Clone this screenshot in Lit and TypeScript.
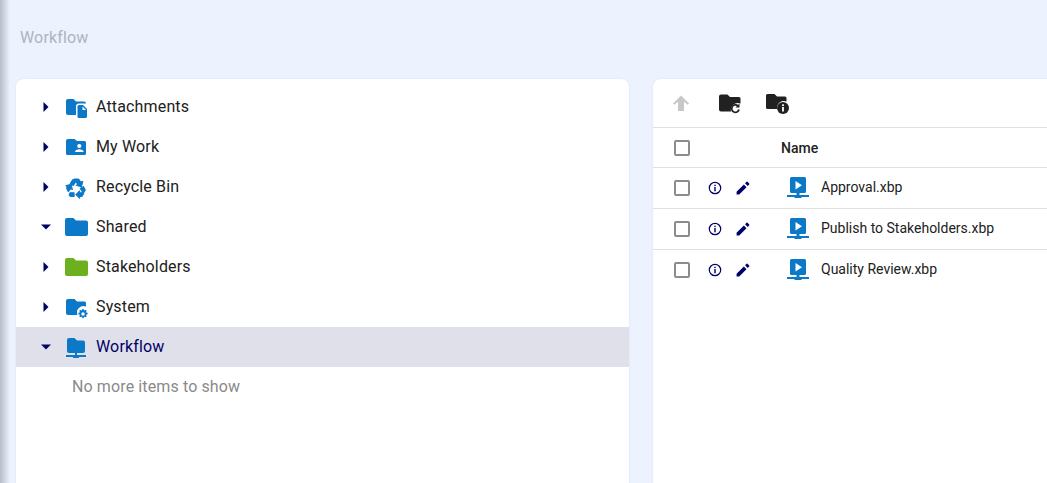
import { LitElement, html, css, svg } from "lit";
import { customElement } from "lit/decorators.js";

const FOLDER = "M1 3h6.500L10 5.500h10a2 2 0 0 1 2 2V19a2 2 0 0 1-2 2H1a2 2 0 0 1-2-2V5a2 2 0 0 1 2-2z";

const icons: Record<string, unknown> = {
  attachments: svg`<path fill="#0b78c8" d="M2 4h5.500L10 6.500h8a2 2 0 0 1 2 2h-7a3 3 0 0 0-3 3V20H2a2 2 0 0 1-2-2V6a2 2 0 0 1 2-2z"/>
    <path fill="#0b78c8" d="M13 10h4l4 4v7.500a1.500 1.500 0 0 1-1.500 1.500h-6.500a1.500 1.500 0 0 1-1.500-1.500v-10a1.500 1.500 0 0 1 1.500-1.500z"/>
    <path fill="#fff" d="M16.500 11.500V15h3.500z"/>`,
  mywork: svg`<path fill="#0b78c8" d="M2 4h6.500L11 6h7.500A1.500 1.500 0 0 1 20 7.500v11a1.500 1.500 0 0 1-1.500 1.500h-17A1.500 1.500 0 0 1 0 18.500V6a2 2 0 0 1 2-2z"/>
    <circle cx="13.300" cy="11" r="2.100" fill="#fff"/><path fill="#fff" d="M9 17c0-2 2.300-2.800 4.300-2.800s4.300.8 4.300 2.800z"/>`,
  recycle: svg`<g transform="translate(-1.100 2.100) scale(.92)"><path fill="#0b78c8" stroke="#0b78c8" stroke-width="1.100" stroke-linejoin="round" d="M5.770 7.150 7.200 4.780l1.030-1.710c.39-.65 1.330-.65 1.720 0l1.480 2.460-1.230 2.060-1 1.620zM17.100 5.400l-1.500-2.450C15.250 2.350 14.600 2 13.900 2h-3.600l3.600 6-1.730 1 5.770 1.540L19.480 4.770zM21.720 12.970l-1.600-2.660-3.460 2L18.870 16H20c.76 0 1.450-.43 1.790-1.110.14-.28.21-.58.21-.89 0-.36-.1-.71-.28-1.030zM16 21h1.500c.76 0 1.450-.43 1.790-1.110L20.740 17H16v-2l-4 4 4 4v-2zM10 17H5.700l-.84 1.400c-.36.6-.29 1.380.09 1.960.33.5.89.64 1.500.64H10zM6.460 12.510l1.730 1-1.540-5.770-5.770 1.540 1.740 1-.45.74c-.32.53-.35 1.180-.08 1.740l1.500 3z"/></g>`,
  shared: svg`<path fill="#0b78c8" d="${FOLDER}"/>`,
  stakeholders: svg`<path fill="#6cb01e" d="${FOLDER}"/>`,
  system: svg`<path fill="#0b78c8" d="M2 4h6.500L11 6.500h7.500A1.500 1.500 0 0 1 20 8v3.500A6.500 6.500 0 0 0 11.500 20H2a2 2 0 0 1-2-2V6a2 2 0 0 1 2-2z"/>
    <g transform="translate(17 19) scale(.75) translate(-17.500 -16.800)"><path fill="#0b78c8" fill-rule="evenodd" d="M16.600 10h1.800l.3 1.500 1.200.5 1.300-.8 1.300 1.300-.8 1.300.5 1.200 1.500.3v1.800l-1.500.3-.5 1.200.8 1.300-1.300 1.300-1.300-.8-1.200.5-.3 1.500h-1.800l-.3-1.500-1.200-.5-1.300.8-1.300-1.300.8-1.300-.5-1.200-1.500-.3v-1.800l1.500-.3.5-1.200-.8-1.300 1.300-1.300 1.300.8 1.200-.5zM17.500 14.500a2.300 2.300 0 1 0 0 4.600 2.300 2.300 0 0 0 0-4.600z"/></g>`,
  workflow: svg`<path fill="#0b78c8" d="M3 3h5.500L11 5.500h6a2 2 0 0 1 2 2V16a2 2 0 0 1-2 2H3a2 2 0 0 1-2-2V5a2 2 0 0 1 2-2z"/>
    <path fill="#0b78c8" d="M9 18h2v2h9v2h-7v1H7v-1H0v-2h9z"/>`,
};

interface TreeItem {
  label: string;
  icon: string;
  open?: boolean;
  selected?: boolean;
}

const TREE: TreeItem[] = [
  { label: "Attachments", icon: "attachments" },
  { label: "My Work", icon: "mywork" },
  { label: "Recycle Bin", icon: "recycle" },
  { label: "Shared", icon: "shared", open: true },
  { label: "Stakeholders", icon: "stakeholders" },
  { label: "System", icon: "system" },
  { label: "Workflow", icon: "workflow", open: true, selected: true },
];

const FILES = ["Approval.xbp", "Publish to Stakeholders.xbp", "Quality Review.xbp"];

@customElement("app-root")
export class AppRoot extends LitElement {
  static styles = css`
    :host {
      display: block;
      position: relative;
      height: 483px;
      overflow: hidden;
      background: #ecf2fe;
      font-family: Roboto, "Liberation Sans", sans-serif;
    }
    .edge {
      position: absolute;
      left: 0;
      top: 0;
      bottom: 0;
      width: 10px;
      background: linear-gradient(to right, #b9bcc9, #ecf2fe);
    }
    .title {
      height: 79px;
      box-sizing: border-box;
      padding: 28px 0 0 20px;
      font-size: 16px;
      line-height: 19px;
      letter-spacing: 0.15px;
      color: #afb2c2;
    }
    .panels {
      display: grid;
      grid-template-columns: 613px 1fr;
      gap: 24px;
      padding-left: 16px;
      margin-right: -20px;
      height: 424px;
      position: relative;
    }
    .panel {
      background: #fff;
      border-radius: 8px 8px 0 0;
      box-shadow: 0 0 2px rgba(120, 130, 170, 0.15);
    }
    .tree {
      padding-top: 8px;
    }
    .node {
      display: flex;
      align-items: center;
      height: 40px;
      padding-left: 20px;
      font-size: 16px;
      letter-spacing: 0.15px;
      color: #212121;
    }
    .node.selected {
      background: #e0e0ea;
      color: #000066;
    }
    .label {
      padding-bottom: 2px;
    }
    .caret {
      width: 20px;
      display: flex;
      justify-content: center;
    }
    .node-icon {
      width: 24px;
      height: 24px;
      margin: 0 6px 0 10px;
      overflow: visible;
    }
    .empty {
      height: 40px;
      line-height: 40px;
      padding-left: 56px;
      font-size: 16px;
      letter-spacing: 0.12px;
      color: #8a8a8a;
    }
    .toolbar {
      display: flex;
      align-items: center;
      height: 49px;
      box-sizing: border-box;
      padding: 0 0 0 16px;
      border-bottom: 1px solid #e0e0e0;
    }
    .toolbar svg {
      width: 24px;
      height: 24px;
      margin-right: 24px;
    }
    .toolbar svg:first-child {
      margin-right: 25px;
    }
    .row {
      display: flex;
      align-items: center;
      height: 41px;
      box-sizing: border-box;
      padding-left: 21px;
      border-bottom: 1px solid #e0e0e0;
      font-size: 14px;
      color: #212121;
    }
    .row:last-child {
      border-bottom-color: transparent;
    }
    .row.head {
      height: 40px;
      font-weight: 500;
    }
    .file-name {
      padding-bottom: 2px;
    }
    .box {
      width: 16px;
      height: 16px;
      box-sizing: border-box;
      border: 2px solid #8c8c8c;
      border-radius: 2px;
      flex: none;
    }
    .name-head {
      margin-left: 91px;
    }
    .info {
      width: 14px;
      height: 14px;
      margin-left: 18px;
    }
    .edit {
      width: 14px;
      height: 14px;
      margin-left: 14px;
    }
    .file-icon {
      width: 22px;
      height: 24px;
      margin: 0 12px 0 37px;
    }
  `;

  renderCaret(open?: boolean) {
    return open
      ? html`<svg width="10" height="6" viewBox="0 0 10 6"><path fill="#000066" d="M0 .5h10L5 5.500z"/></svg>`
      : html`<svg width="6" height="10" viewBox="0 0 6 10"><path fill="#000066" d="M.5 0v10l5-5z"/></svg>`;
  }

  renderFile(name: string) {
    return html`
      <div class="row">
        <div class="box"></div>
        <svg class="info" viewBox="0 0 14 14">
          <circle cx="7" cy="7" r="5.700" fill="none" stroke="#000066" stroke-width="1.200"/>
          <rect x="6.300" y="6" width="1.400" height="4.300" fill="#000066"/>
          <rect x="6.300" y="3.700" width="1.400" height="1.400" fill="#000066"/>
        </svg>
        <svg class="edit" viewBox="0 0 24 24">
          <path fill="#000066" d="M1 18.500V23h4.500L18 10.500 13.500 6zM22.600 5.900a1.200 1.200 0 0 0 0-1.700L19.800 1.400a1.200 1.200 0 0 0-1.700 0L15.500 4 20 8.500z"/>
        </svg>
        <svg class="file-icon" viewBox="0 0 22 24">
          <path fill="#0b78c8" fill-rule="evenodd" d="M4.500 1h13A1.500 1.500 0 0 1 19 2.500V15.500a1.500 1.500 0 0 1-1.500 1.500h-13A1.500 1.500 0 0 1 3 15.500V2.500A1.500 1.500 0 0 1 4.500 1zM8.500 5v8.500l6.500-4.250z"/>
          <path fill="#0b78c8" d="M9.500 17h3v2H22v2h-7.500v1h-7v-1H0v-2h9.500z"/>
        </svg>
        <span class="file-name">${name}</span>
      </div>
    `;
  }

  render() {
    return html`
      <div class="edge"></div>
      <div class="title">Workflow</div>
      <div class="panels">
        <section class="panel tree">
          ${TREE.map(
            (n) => html`
              <div class="node ${n.selected ? "selected" : ""}">
                <span class="caret">${this.renderCaret(n.open)}</span>
                <svg class="node-icon" viewBox="0 0 24 24">${icons[n.icon]}</svg>
                <span class="label">${n.label}</span>
              </div>
            `
          )}
          <div class="empty">No more items to show</div>
        </section>
        <section class="panel">
          <div class="toolbar">
            <svg viewBox="0 0 24 24">
              <path fill="#c8c8c8" d="M12 4.500 4 12.500l1.300 1.300 3.700-3V20h6v-9.200l3.700 3L20 12.500z"/>
            </svg>
            <svg viewBox="0 0 24 24">
              <path fill="#212121" d="M3 3.500h6.500L12 6h9a1.500 1.500 0 0 1 1.500 1.500v5A7 7 0 0 0 13 20.500H3a2 2 0 0 1-2-2V5.500a2 2 0 0 1 2-2z"/>
              <path fill="none" stroke="#212121" stroke-width="1.800" d="M21 18.500a3.700 3.700 0 1 1-1-3.500"/>
              <path fill="#212121" d="M21.500 12.500v4h-4z"/>
            </svg>
            <svg viewBox="0 0 24 24">
              <path fill="#212121" d="M1.500 3h7L11 5.500h8A1.500 1.500 0 0 1 20.500 7v3.500A7 7 0 0 0 11 18H1.500A1.500 1.500 0 0 1 0 16.500V4.500A1.500 1.500 0 0 1 1.500 3z"/>
              <circle cx="17" cy="17" r="6" fill="#212121"/>
              <rect x="16.100" y="16" width="1.800" height="4.500" fill="#fff"/>
              <rect x="16.100" y="13.300" width="1.800" height="1.800" fill="#fff"/>
            </svg>
          </div>
          <div class="row head">
            <div class="box"></div>
            <span class="name-head">Name</span>
          </div>
          ${FILES.map((f) => this.renderFile(f))}
        </section>
      </div>
    `;
  }
}
